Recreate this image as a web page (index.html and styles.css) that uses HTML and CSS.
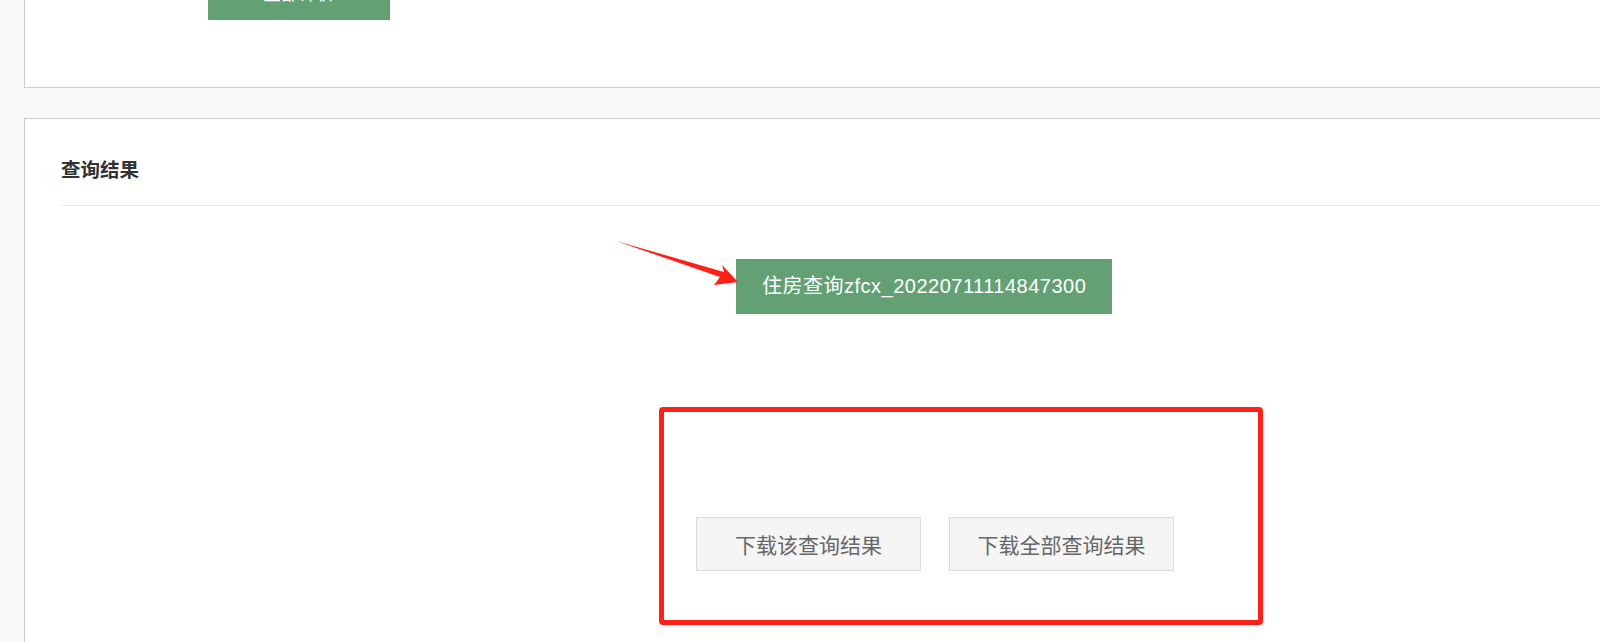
FILE: index.html
```html
<!DOCTYPE html>
<html lang="zh-CN">
<head>
<meta charset="utf-8">
<title>查询结果</title>
<link rel="stylesheet" href="styles.css">
</head>
<body>
<div class="page">
  <section class="panel panel-top">
    <button class="btn-green btn-top">全部评价</button>
  </section>
  <section class="panel panel-result">
    <div class="panel-head">
      <h2 class="panel-title">查询结果</h2>
    </div>
    <div class="result-body">
      <div class="file-row">
        <button class="btn-green btn-file">住房查询zfcx_20220711114847300</button>
      </div>
      <div class="mark-box">
        <div class="dl-row">
          <button class="btn-dl">下载该查询结果</button>
          <button class="btn-dl">下载全部查询结果</button>
        </div>
      </div>
    </div>
  </section>
  <svg class="arrow" width="140" height="60" viewBox="0 0 140 60" aria-hidden="true">
    <polygon points="0,1 108,32 106,25 122,42 98,45 104,37" fill="#ff2118"/>
  </svg>
</div>
</body>
</html>
```

FILE: styles.css
```css
html, body {
  margin: 0;
  padding: 0;
}
body {
  background: #f9f9f9;
  overflow: hidden;
  width: 1600px;
  height: 642px;
  font-family: "Liberation Sans", "Noto Sans CJK SC", sans-serif;
}
.page {
  position: relative;
  padding-left: 24px;
}
.panel {
  width: 1700px;
  background: #fff;
  border: 1px solid #cccccc;
  box-sizing: border-box;
}
.panel-top {
  border-top: none;
  height: 88px;
  padding-left: 183px;
}
.btn-green {
  display: inline-block;
  border: none;
  margin: 0;
  background: #63a074;
  color: #fff;
  font-family: "Liberation Sans", "Noto Sans CJK SC", sans-serif;
  cursor: pointer;
}
.btn-top {
  width: 182px;
  height: 52px;
  margin-top: -32px;
  font-size: 18px;
  line-height: 52px;
  padding: 0;
  vertical-align: top;
}
.panel-result {
  margin-top: 30px;
  height: 600px;
  padding-left: 36px;
}
.panel-head {
  padding-top: 37px;
  padding-bottom: 23px;
  border-bottom: 1px solid #e8e8e8;
}
.panel-title {
  margin: 0;
  font-family: "Noto Sans CJK SC", sans-serif;
  font-size: 19.5px;
  line-height: 26px;
  font-weight: bold;
  color: #333;
}
.result-body {
  padding-top: 53px;
}
.file-row {
  padding-left: 675px;
}
.btn-file {
  height: 55px;
  line-height: 55px;
  padding: 0 26px;
  font-size: 20px;
  letter-spacing: 0.5px;
  vertical-align: top;
}
.mark-box {
  margin-top: 93px;
  margin-left: 598px;
  width: 604px;
  height: 218px;
  box-sizing: border-box;
  border: 5px solid #ff2118;
  border-radius: 4px;
  padding: 105px 0 0 32px;
}
.dl-row {
  display: flex;
  gap: 28px;
}
.btn-dl {
  width: 225px;
  height: 54px;
  margin: 0;
  padding: 0;
  background: #f5f5f5;
  border: 1px solid #dcdcdc;
  color: #666;
  font-family: "Noto Sans CJK SC", sans-serif;
  font-size: 21px;
  line-height: 52px;
  cursor: pointer;
}
.arrow {
  position: absolute;
  left: 616px;
  top: 240px;
}
```
